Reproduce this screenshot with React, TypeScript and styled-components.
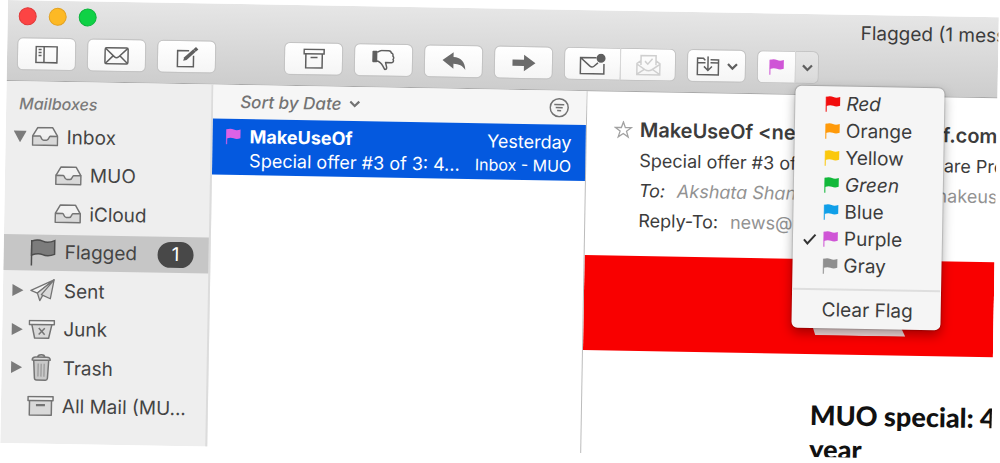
import React, { useState } from "react";
import styled, { createGlobalStyle, css } from "styled-components";

const GlobalStyle = createGlobalStyle`
  * { box-sizing: border-box; }
  body { margin: 0; background: #fff; font-family: Inter, "Liberation Sans", sans-serif; font-size: 19px; color: #3c3c3c; }
  button { font: inherit; color: inherit; padding: 0; border: 0; background: none; cursor: pointer; }
  a { color: inherit; text-decoration: none; }
  ul, h1, h2, h3, p { margin: 0; padding: 0; font-weight: 400; }
  ul { list-style: none; }
  svg { display: block; flex: none; }
`;

const Page = styled.main`
  min-height: 100vh;
  padding-left: 8px;
  overflow: hidden;
`;

/* The whole window hangs one degree off level. */
const Window = styled.div`
  display: flex;
  flex-direction: column;
  width: calc(100% - 1px);
  height: calc(100vh - 20px);
  overflow: hidden;
  transform: rotate(1deg);
  transform-origin: 0 0;
  background: #fff;
`;

const Header = styled.header`
  flex: none;
  height: 81px;
  background: linear-gradient(#e6e6e6, #cdcdcd);
  border-bottom: 1px solid #a9a9a9;
`;

const TitleBar = styled.div`
  display: flex;
  align-items: center;
  height: 37px;
`;

const Lights = styled.div`
  display: flex;
  gap: 12px;
  padding: 0 0 6px 11px;
`;

const Light = styled.button<{ $fill: string; $edge: string }>`
  width: 18px;
  height: 18px;
  border-radius: 50%;
  background: ${(p) => p.$fill};
  border: 1px solid ${(p) => p.$edge};
`;

const Title = styled.h1`
  flex: 0 0 138px;
  margin-left: auto;
  overflow: hidden;
  white-space: nowrap;
  font-size: 19px;
  line-height: 24px;
`;

const Toolbar = styled.div`
  display: flex;
  gap: 11px;
  padding-left: 10px;
`;

const Spacer = styled.div`
  width: 46px;
`;

const Group = styled.div`
  position: relative;
  display: flex;
  height: 33px;
`;

const ToolButton = styled.button<{ $width?: number; $side?: "left" | "right"; $pressed?: boolean }>`
  display: flex;
  align-items: center;
  justify-content: center;
  gap: 7px;
  width: ${(p) => p.$width ?? 59}px;
  height: 33px;
  color: #5f5f5f;
  border: 1px solid #c3c3c3;
  border-radius: 6px;
  background: ${(p) => (p.$pressed ? "linear-gradient(#e6e6e6, #dadada)" : "linear-gradient(#fff, #f5f5f5)")};
  ${(p) => p.$side === "left" && css`border-radius: 6px 0 0 6px; border-right: 0;`}
  ${(p) => p.$side === "right" && css`border-radius: 0 6px 6px 0; border-left-color: #d6d6d6;`}
  &:disabled { color: #cfcfcf; }
`;

const Menu = styled.div`
  position: absolute;
  top: 35px;
  left: 39px;
  z-index: 2;
  width: 149px;
  padding: 4px 0 5px;
  border-radius: 6px;
  background: #f5f5f5;
  box-shadow: 0 0 1px 1px rgba(0, 0, 0, 0.14), 0 5px 12px rgba(0, 0, 0, 0.35);
`;

const MenuItem = styled.button<{ $slanted?: boolean }>`
  display: grid;
  grid-template-columns: 14px 17px 1fr;
  align-items: center;
  column-gap: 5px;
  width: 100%;
  height: 27px;
  padding-left: 10px;
  text-align: left;
  font-size: 19px;
  font-style: ${(p) => (p.$slanted ? "italic" : "normal")};
  white-space: nowrap;
`;

const ClearItem = styled(MenuItem)`
  display: block;
  padding-left: 30px;
`;

const Separator = styled.div`
  height: 2px;
  margin: 9px 1px 6px;
  background: #dedede;
`;

const Panes = styled.div`
  display: flex;
  flex: 1;
  min-height: 0;
`;

const Sidebar = styled.nav`
  flex: 0 0 207px;
  background: #eeeeee;
  border-right: 2px solid #dcdcdc;
`;

const SidebarHeading = styled.h2`
  padding: 12px 0 5px 13px;
  font-size: 16px;
  line-height: 20px;
  font-style: italic;
  font-weight: 500;
  color: #7a7a7a;
`;

const Mailboxes = styled.ul`
  display: flex;
  flex-direction: column;
  justify-content: space-between;
  height: 306px;
`;

const MailboxRow = styled.li<{ $nested?: boolean; $selected?: boolean }>`
  display: flex;
  align-items: center;
  height: 36px;
  padding-left: ${(p) => (p.$nested ? 32 : 8)}px;
  background: ${(p) => (p.$selected ? "#c6c6c6" : "transparent")};
`;

const Disclosure = styled.button`
  width: 18px;
  color: #7b7b7b;
`;

const Gutter = styled.span`
  width: 18px;
`;

const MailboxLink = styled.a`
  display: flex;
  align-items: center;
  gap: 8px;
  white-space: nowrap;
  color: #444;
`;

const Badge = styled.span`
  width: 36px;
  height: 26px;
  margin: 0 15px 0 auto;
  border-radius: 13px;
  background: #484848;
  color: #fff;
  font-size: 19px;
  line-height: 26px;
  text-align: center;
`;

const MessageList = styled.section`
  flex: 0 0 374px;
  border-right: 1px solid #bcbcbc;
`;

const SortBar = styled.div`
  display: flex;
  align-items: center;
  justify-content: space-between;
  height: 34px;
  padding: 0 17px 0 27px;
  background: #f6f6f6;
  color: #737373;
`;

const SortButton = styled.button`
  display: flex;
  align-items: center;
  gap: 8px;
  font-size: 17px;
  font-style: italic;
  font-weight: 500;
`;

const Message = styled.a`
  display: grid;
  grid-template-columns: 25px 1fr auto;
  grid-template-rows: 24px 24px;
  align-items: center;
  height: 56px;
  padding: 5px 14px 3px 12px;
  background: #0459df;
  color: #fff;
  white-space: nowrap;
`;

const Sender = styled.strong`
  font-size: 18px;
  font-weight: 700;
`;

const Preview = styled.span`
  grid-column: 2;
  font-size: 18px;
`;

const Meta = styled.span<{ $small?: boolean }>`
  font-size: ${(p) => (p.$small ? 16 : 18)}px;
  text-align: right;
`;

const Reader = styled.article`
  flex: 1;
  min-width: 0;
  overflow: hidden;
  white-space: nowrap;
`;

const Envelope = styled.div`
  display: grid;
  grid-template-columns: 26px 1fr;
  grid-auto-rows: 30px;
  align-items: center;
  height: 164px;
  padding: 23px 0 0 27px;
`;

const From = styled.h2`
  font-size: 20px;
  font-weight: 600;
`;

const Line = styled.p<{ $slanted?: boolean }>`
  grid-column: 2;
  font-size: 18px;
  font-style: ${(p) => (p.$slanted ? "italic" : "normal")};
`;

const Address = styled.span<{ $upright?: boolean }>`
  margin-left: 12px;
  color: #929292;
  font-style: ${(p) => (p.$upright ? "normal" : "inherit")};
`;

const StarButton = styled.button`
  color: #a2a2a2;
`;

const Banner = styled.div`
  height: 95px;
  padding: 64px 0 0 228px;
  background: #f90000;
`;

const Story = styled.h3`
  padding: 44px 0 0 228px;
  font-family: Lato, "Open Sans", sans-serif;
  font-size: 27px;
  font-weight: 900;
  line-height: 34px;
  color: #111;
`;

const Chevron = () => (
  <svg width="11" height="8" viewBox="0 0 11 8" fill="none" stroke="currentColor" strokeWidth="2.2">
    <path d="M1 1.5 5.5 6 10 1.5" />
  </svg>
);

const Flag = ({ color }: { color: string }) => (
  <svg width="17" height="17" viewBox="0 0 17 17">
    <path d="M2 1.500V16.500" stroke={color} strokeWidth="1.300" opacity="0.8" />
    <path d="M2 1.500C5 .6 7 .8 9 1.600S13 2.400 15.800 1.400V10.200C13 11.400 11 11.200 9 10.400S5 9.600 2 10.600Z" fill={color} />
  </svg>
);

const PanelIcon = () => (
  <svg width="23" height="18" viewBox="0 0 23 18" fill="none" stroke="currentColor" strokeWidth="1.500">
    <rect x="1" y="1" width="21" height="16" />
    <path d="M9 1V17M3.500 4H6.500M3.500 7H6.500M3.500 10H6.500" />
  </svg>
);

const EnvelopeIcon = () => (
  <svg width="25" height="18" viewBox="0 0 25 18" fill="none" stroke="currentColor" strokeWidth="1.500">
    <rect x="1" y="1" width="23" height="16" rx="1.500" />
    <path d="M1.500 1.500 10.500 10Q12.500 11.600 14.500 10L23.500 1.500M1.500 16.500 9 9M23.500 16.500 16 9" />
  </svg>
);

const ComposeIcon = () => (
  <svg width="24" height="22" viewBox="0 0 24 22" fill="none" stroke="currentColor" strokeWidth="1.500">
    <path d="M14 4.500H2.500V20.500H18.500V9.500" />
    <path d="M8.200 14.800 9.200 11.200 18.200 3 20.600 5.400 11.600 13.800Z" fill="currentColor" stroke="none" />
    <path d="M19.500 4.300 22 2" strokeWidth="3.500" />
  </svg>
);

const ArchiveIcon = () => (
  <svg width="22" height="21" viewBox="0 0 22 21" fill="none" stroke="currentColor" strokeWidth="1.500">
    <rect x="1" y="1" width="20" height="4.500" />
    <path d="M2.800 5.500V19.500H19.200V5.500M7.500 9.200H14.500" />
  </svg>
);

const ThumbDownIcon = () => (
  <svg width="23" height="21" viewBox="0 0 23 21" fill="none" stroke="currentColor" strokeWidth="1.500" strokeLinejoin="round">
    <rect x="1" y="2" width="3.500" height="10" fill="currentColor" />
    <path d="M5 11.500C8 12 9.500 14 11 16.500L12.800 19.800C14.500 20 15.200 18.800 14.600 17L13.600 13H19.500C21.500 12.800 22 11 21 9.800 22 8.600 21.800 7 20.800 6.300 21.300 4.800 20.500 3.500 19.200 3.200 19 1.700 18 1 16.500 1H9.500C7.800 1 7 2.500 5 2.500" />
  </svg>
);

const ReplyIcon = () => (
  <svg width="24" height="19" viewBox="0 0 24 19" fill="#6b6b6b">
    <path d="M.5 8.500 11.500.5V5.200C18.500 5.400 23 9.500 23.500 18 20.500 13.600 17 12.200 11.500 12V17Z" />
  </svg>
);

const ForwardIcon = () => (
  <svg width="24" height="18" viewBox="0 0 24 18" fill="#6b6b6b">
    <path d="M.5 5.800H12V.8L23.500 9 12 17.200V12H.5Z" />
  </svg>
);

const UnreadIcon = () => (
  <svg width="27" height="22" viewBox="0 0 27 22" fill="none" stroke="currentColor" strokeWidth="1.500">
    <path d="M17.500 4.500H1.500V20.500H25V10.500M2 5 11 13Q13 14.500 15 13L19 9.600" />
    <circle cx="22" cy="5" r="4.500" fill="currentColor" stroke="none" />
  </svg>
);

const ReadIcon = () => (
  <svg width="25" height="22" viewBox="0 0 25 22" fill="none" stroke="currentColor" strokeWidth="1.500">
    <path d="M5 6.500 1 9.500V20.500H24V9.500L20 6.500M5 11V1.500H20V11M1 10 9 15.500Q12.500 17.500 16 15.500L24 10M1.500 20 8 15.500M23.500 20 17 15.500M9 7 11.800 10 16.500 4.500" />
  </svg>
);

const MoveIcon = () => (
  <svg width="24" height="20" viewBox="0 0 24 20" fill="none" stroke="currentColor" strokeWidth="1.500">
    <path d="M9.500 3.500H8.500L7.500 2H1.500V18.500H22.500V3.500H14.500M1.500 6.500H9.500M14.500 6.500H22.500M12 0V14M8 10.200 12 14.200 16 10.200" />
  </svg>
);

const boxStroke = { fill: "#d9d9d9", stroke: "#747474", strokeWidth: 1.5, strokeLinejoin: "round" as const };

const TrayIcon = () => (
  <svg width="27" height="20" viewBox="0 0 27 20" {...boxStroke}>
    <path d="M1 9.500 6 1H21L26 9.500" fill="#f2f2f2" />
    <path d="M1 9.500H8.500C9.500 9.500 9.500 13.500 12 13.500H15C17.500 13.500 17.500 9.500 18.500 9.500H26V18.500H1Z" />
  </svg>
);

const BigFlagIcon = () => (
  <svg width="27" height="28" viewBox="0 0 27 28" stroke="#4d4d4d" strokeWidth="1.500">
    <path d="M2 1.500V27" />
    <path d="M2 2.500C7 .8 10 1 13 2.500S20 4 25 1.800V15.500C20 17.600 16 17.300 13 16S7 14.800 2 16.500Z" fill="#7c7c7c" />
  </svg>
);

const PlaneIcon = () => (
  <svg width="27" height="24" viewBox="0 0 27 24" {...boxStroke} strokeWidth={1.3}>
    <path d="M25 1 2 12 8.500 14.500Z" fill="#f2f2f2" />
    <path d="M25 1 8.500 14.500 11 22 14 16.500M25 1 12.500 16 21.500 20Z" />
  </svg>
);

const JunkIcon = () => (
  <svg width="27" height="20" viewBox="0 0 27 20" {...boxStroke}>
    <path d="M3.500 5 6.500 18.500H20.500L23.500 5" />
    <rect x="1" y="1" width="25" height="4" fill="#f2f2f2" />
    <path d="M10.500 8.500 16.500 15M16.500 8.500 10.500 15" />
  </svg>
);

const TrashIcon = () => (
  <svg width="27" height="28" viewBox="0 0 27 28" {...boxStroke}>
    <path d="M6 6.500 7 24.500Q7.200 26.500 9 26.500H18Q19.800 26.500 20 24.500L21 6.500Z" fill="#c9c9c9" />
    <path d="M10.500 10V23M13.500 10V23M16.500 10V23" stroke="#8d8d8d" strokeWidth="1" />
    <path d="M4.500 6.500Q4.500 3.500 8 3.500H19Q22.500 3.500 22.500 6.500ZM10 3.500Q10 1 13.500 1T17 3.500" />
  </svg>
);

const CrateIcon = () => (
  <svg width="27" height="21" viewBox="0 0 27 21" {...boxStroke}>
    <path d="M2.500 5V19.500H24.500V5" />
    <rect x="1" y="1" width="25" height="4" fill="#f2f2f2" />
    <path d="M9 9.500H18" strokeWidth="2.200" />
  </svg>
);

const FilterIcon = () => (
  <svg width="20" height="20" viewBox="0 0 20 20" fill="none" stroke="currentColor" strokeWidth="1.500">
    <circle cx="10" cy="10" r="9" />
    <path d="M5 7H15M6.500 10H13.500M8 13H12" />
  </svg>
);

const StarIcon = () => (
  <svg width="19" height="18" viewBox="0 0 19 18" fill="none" stroke="currentColor" strokeWidth="1.300">
    <path d="M9.500 1.200 11.500 6.800H17.500L12.700 10.400 14.500 16.200 9.500 12.700 4.500 16.200 6.300 10.400 1.500 6.800H7.500Z" />
  </svg>
);

const Triangle = ({ open }: { open?: boolean }) => (
  <svg width="13" height="12" viewBox="0 0 13 12" fill="currentColor">
    <path d={open ? "M0 .5H13L6.500 12Z" : "M1.500 0 12.500 6 1.500 12Z"} />
  </svg>
);

const flags = [
  { name: "Red", color: "#f20d0d", slanted: true },
  { name: "Orange", color: "#ff9a0a" },
  { name: "Yellow", color: "#fbc80c" },
  { name: "Green", color: "#12b83a", slanted: true },
  { name: "Blue", color: "#109fe8" },
  { name: "Purple", color: "#cf55d6" },
  { name: "Gray", color: "#8f8f8f" },
];

type Mailbox = {
  name: string;
  Icon: () => React.ReactElement;
  toggle?: "open" | "closed";
  nested?: boolean;
  count?: number;
};

const mailboxes: Mailbox[] = [
  { name: "Inbox", Icon: TrayIcon, toggle: "open" },
  { name: "MUO", Icon: TrayIcon, nested: true },
  { name: "iCloud", Icon: TrayIcon, nested: true },
  { name: "Flagged", Icon: BigFlagIcon, count: 1 },
  { name: "Sent", Icon: PlaneIcon, toggle: "closed" },
  { name: "Junk", Icon: JunkIcon, toggle: "closed" },
  { name: "Trash", Icon: TrashIcon, toggle: "closed" },
  { name: "All Mail (MU...", Icon: CrateIcon },
];

export default function App() {
  const [picked, setPicked] = useState("Purple");
  const [menuOpen, setMenuOpen] = useState(true);

  return (
    <Page>
      <GlobalStyle />
      <Window>
        <Header>
          <TitleBar>
            <Lights>
              <Light $fill="#fc4444" $edge="#e03a3a" aria-label="Close" />
              <Light $fill="#fdb924" $edge="#e2a01e" aria-label="Minimize" />
              <Light $fill="#0fd145" $edge="#0cb43c" aria-label="Zoom" />
            </Lights>
            <Title>Flagged (1 message)</Title>
          </TitleBar>
          <Toolbar>
            <ToolButton aria-label="Toggle sidebar"><PanelIcon /></ToolButton>
            <ToolButton aria-label="Get mail"><EnvelopeIcon /></ToolButton>
            <ToolButton aria-label="New message"><ComposeIcon /></ToolButton>
            <Spacer />
            <ToolButton aria-label="Archive"><ArchiveIcon /></ToolButton>
            <ToolButton aria-label="Junk"><ThumbDownIcon /></ToolButton>
            <ToolButton aria-label="Reply"><ReplyIcon /></ToolButton>
            <ToolButton aria-label="Forward"><ForwardIcon /></ToolButton>
            <Group>
              <ToolButton $width={56} $side="left" aria-label="Mark unread"><UnreadIcon /></ToolButton>
              <ToolButton $width={56} $side="right" aria-label="Mark read" disabled><ReadIcon /></ToolButton>
            </Group>
            <ToolButton aria-label="Move to"><MoveIcon /><Chevron /></ToolButton>
            <Group>
              <ToolButton $width={38} $side="left" aria-label="Flag"><Flag color="#cf55d6" /></ToolButton>
              <ToolButton
                $width={24}
                $side="right"
                $pressed={menuOpen}
                aria-label="Flag colours"
                aria-expanded={menuOpen}
                onClick={() => setMenuOpen(!menuOpen)}
              >
                <Chevron />
              </ToolButton>
              {menuOpen && (
                <Menu role="menu">
                  {flags.map((flag) => (
                    <MenuItem
                      key={flag.name}
                      role="menuitemradio"
                      aria-checked={picked === flag.name}
                      $slanted={flag.slanted}
                      onClick={() => setPicked(flag.name)}
                    >
                      <svg width="14" height="12" viewBox="0 0 14 12" fill="none" stroke="#333" strokeWidth="2">
                        {picked === flag.name && <path d="M1 6.500 4.500 10.500 12.500 1.500" />}
                      </svg>
                      <Flag color={flag.color} />
                      {flag.name}
                    </MenuItem>
                  ))}
                  <Separator />
                  <ClearItem role="menuitem" onClick={() => setPicked("")}>Clear Flag</ClearItem>
                </Menu>
              )}
            </Group>
          </Toolbar>
        </Header>

        <Panes>
          <Sidebar>
            <SidebarHeading>Mailboxes</SidebarHeading>
            <Mailboxes>
              {mailboxes.map(({ name, Icon, toggle, nested, count }) => (
                <MailboxRow key={name} $nested={nested} $selected={name === "Flagged"}>
                  {toggle ? (
                    <Disclosure aria-label={`Toggle ${name}`}><Triangle open={toggle === "open"} /></Disclosure>
                  ) : (
                    <Gutter />
                  )}
                  <MailboxLink href="#mailbox"><Icon />{name}</MailboxLink>
                  {count && <Badge>{count}</Badge>}
                </MailboxRow>
              ))}
            </Mailboxes>
          </Sidebar>

          <MessageList>
            <SortBar>
              <SortButton>Sort by Date <Chevron /></SortButton>
              <button aria-label="Filter"><FilterIcon /></button>
            </SortBar>
            <Message href="#message">
              <Flag color="#dd62e6" />
              <Sender>MakeUseOf</Sender>
              <Meta>Yesterday</Meta>
              <Preview>Special offer #3 of 3: 4...</Preview>
              <Meta $small>Inbox - MUO</Meta>
            </Message>
          </MessageList>

          <Reader>
            <Envelope>
              <StarButton aria-label="Star"><StarIcon /></StarButton>
              <From>MakeUseOf &lt;news@makeuseof.com&gt;</From>
              <Line>Special offer #3 of 3: 4 years FileShare Premium</Line>
              <Line $slanted>
                To:<Address>Akshata Shanbhag</Address>
                <Address $upright>&lt;aksha@makeuseof.com&gt;</Address>
              </Line>
              <Line>Reply-To:<Address>news@makeuseof.com</Address></Line>
            </Envelope>
            <Banner>
              <svg width="94" height="12" viewBox="0 0 94 12" fill="#f7dede">
                <path d="M0 0H88L94 12H4Z" />
              </svg>
            </Banner>
            <Story>MUO special: 4<br />year</Story>
          </Reader>
        </Panes>
      </Window>
    </Page>
  );
}
